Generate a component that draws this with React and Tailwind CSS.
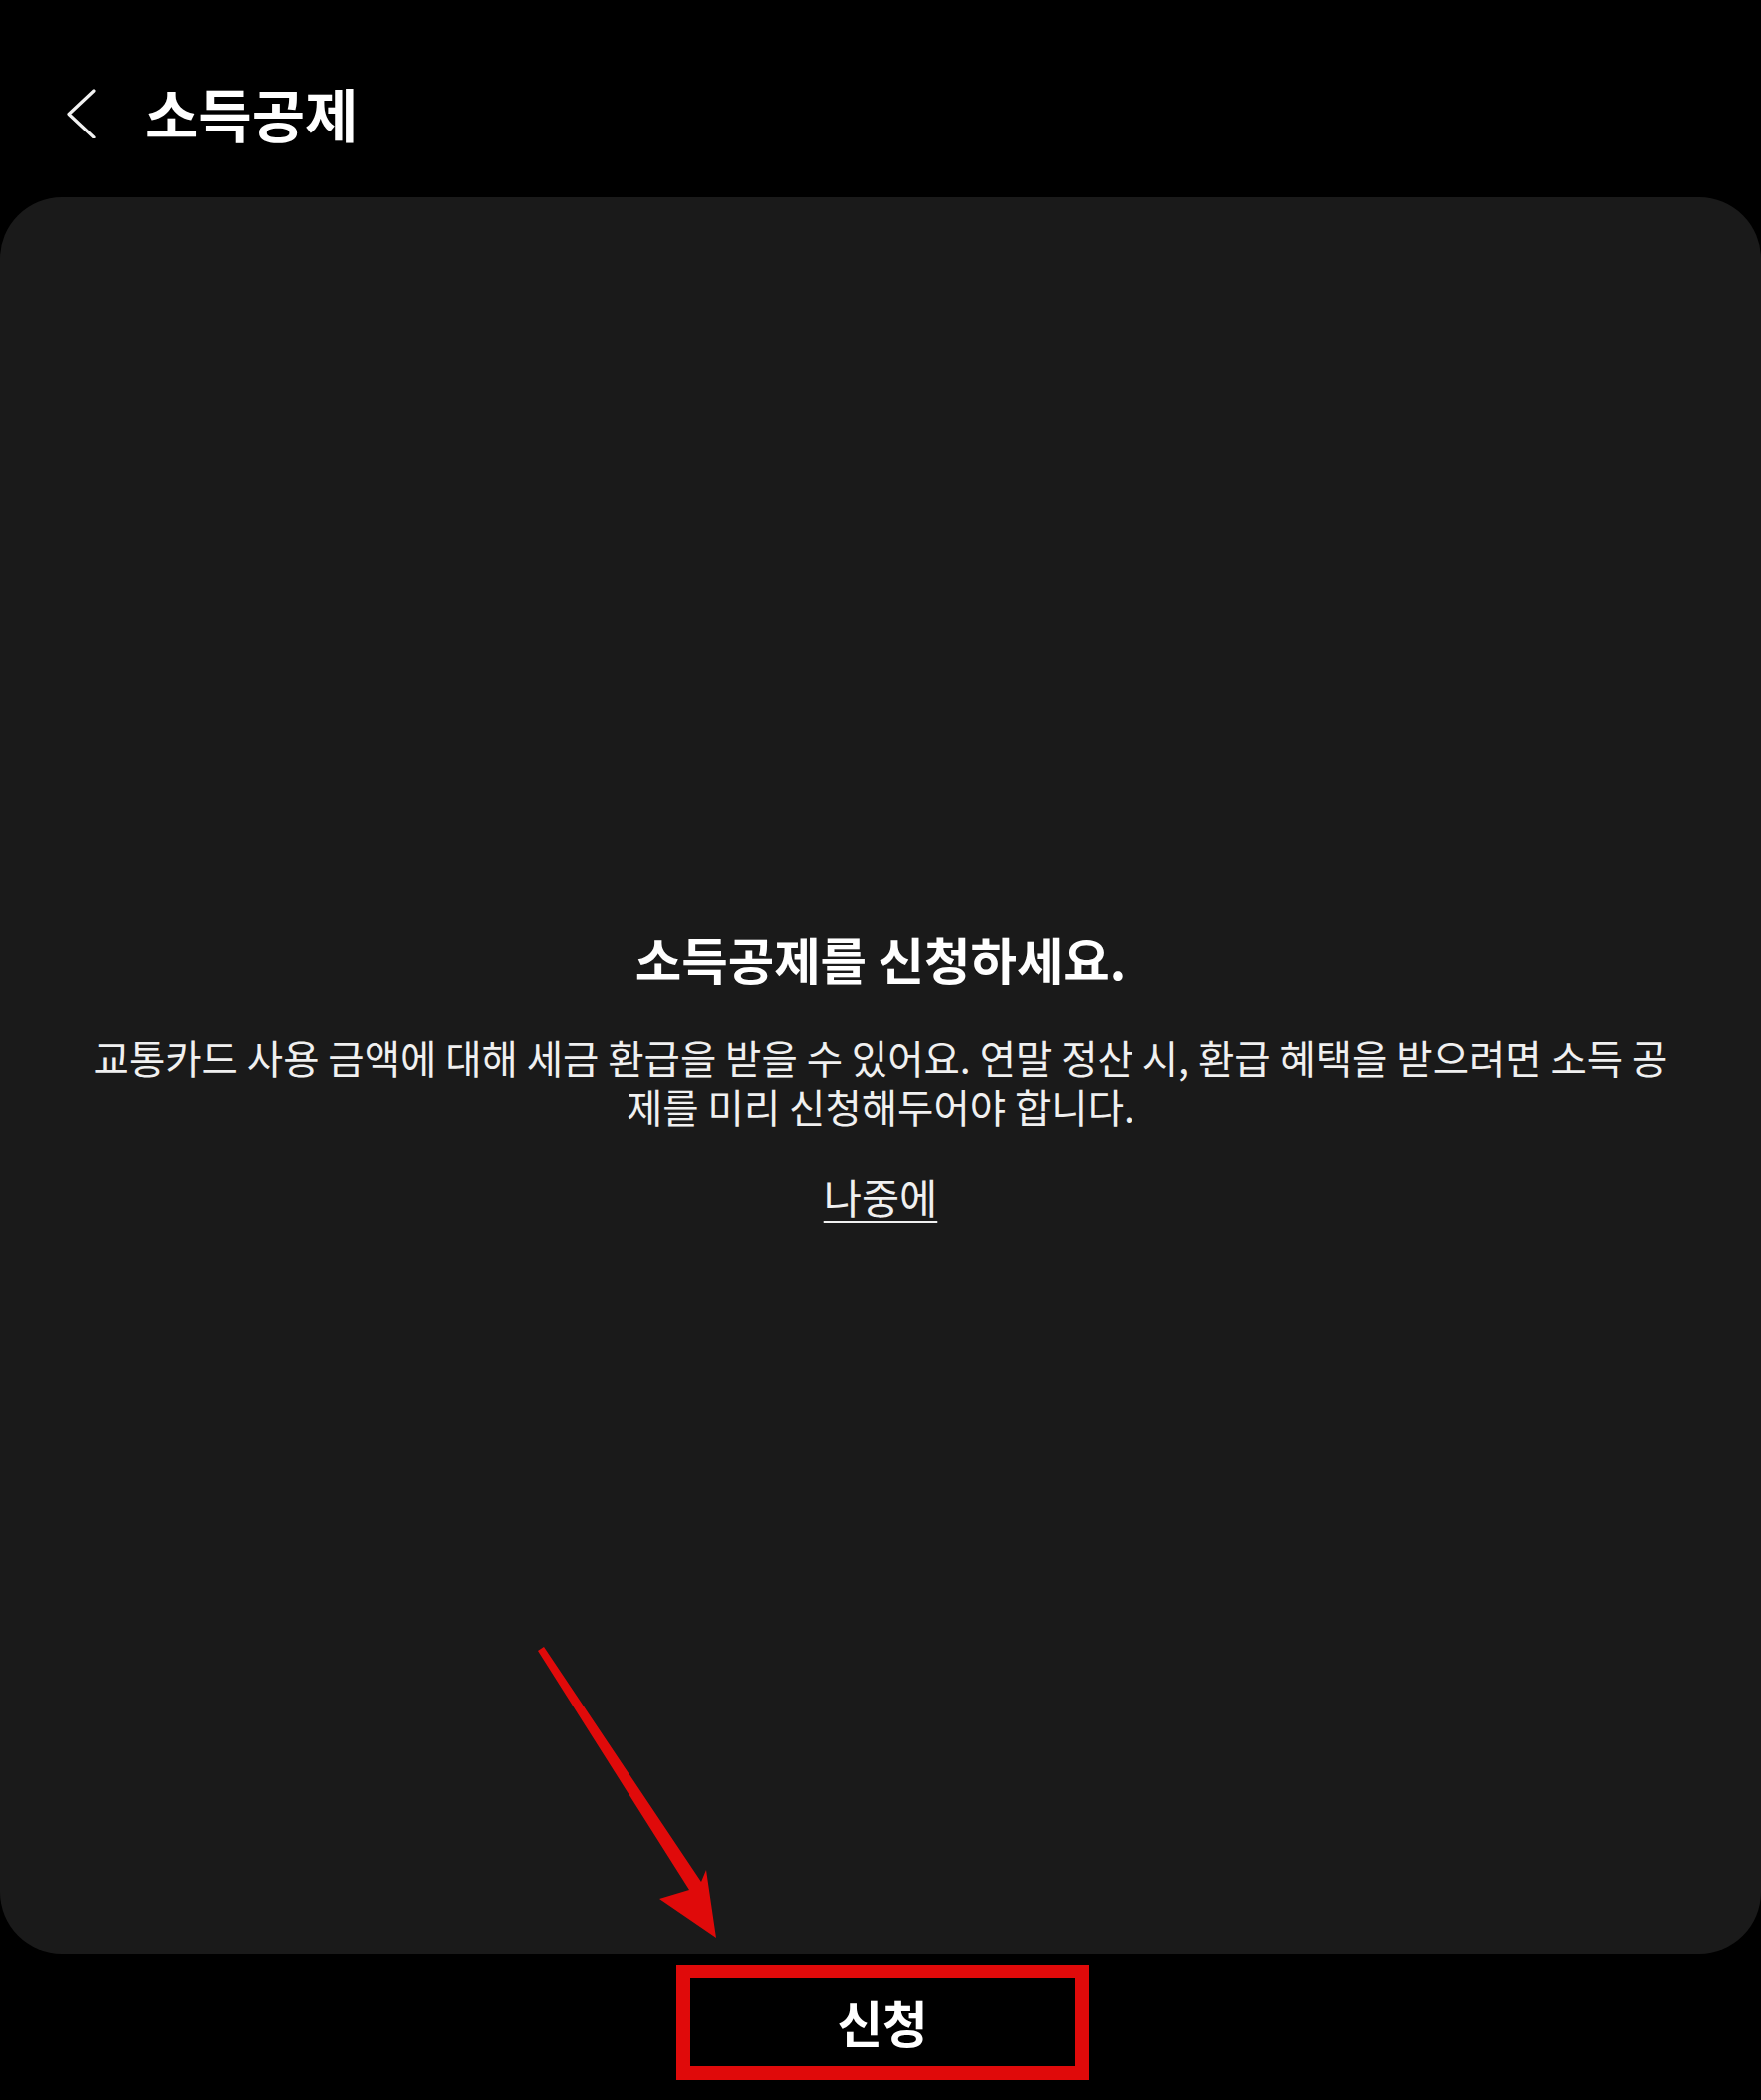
import React from "react";

export default function App() {
  return (
    <div className="relative w-[1768px] h-[2108px] bg-black flex flex-col overflow-hidden font-['Noto_Sans_CJK_KR','Noto_Sans',sans-serif] text-[#f5f5f5]">
      {/* Header */}
      <header className="h-[198px] shrink-0 pt-[81px]">
        <div className="h-[64px] flex items-center">
          <button className="ml-[66px] w-[30px] h-[52px] flex items-center justify-center" aria-label="뒤로">
            <svg width="30" height="52" viewBox="0 0 30 52" fill="none">
              <polyline points="28,4 3,27.5 28,51" stroke="#f2f2f2" strokeWidth="3.2" strokeLinecap="round" strokeLinejoin="round" />
            </svg>
          </button>
          <h1 className="ml-[50px] text-[58px] leading-[64px] font-bold text-white">소득공제</h1>
        </div>
      </header>

      {/* Card */}
      <main className="h-[1763px] shrink-0 bg-[#1a1a1a] rounded-[62px] flex flex-col items-center justify-center">
        <div className="flex flex-col items-center text-center">
          <h2 className="text-[50.5px] leading-[56px] font-bold text-white">소득공제를 신청하세요.</h2>
          <p className="mt-[46px] text-[39.5px] leading-[49px] font-normal text-[#f0f0f0] whitespace-nowrap">
            교통카드 사용 금액에 대해 세금 환급을 받을 수 있어요. 연말 정산 시, 환급 혜택을 받으려면 소득 공
            <br />
            제를 미리 신청해두어야 합니다.
          </p>
          <a className="mt-[42px] text-[41.5px] leading-[50px] text-[#f0f0f0] underline decoration-[2px] underline-offset-[7px]">
            나중에
          </a>
        </div>
      </main>

      {/* Bottom button */}
      <footer className="flex-1 flex justify-center pt-[11px]">
        <button className="ml-[4px] w-[414px] h-[116px] border-[14px] border-[#e00a0a] bg-black flex items-center justify-center">
          <span className="text-[49.5px] leading-[56px] font-bold text-white">신청</span>
        </button>
      </footer>

      {/* Annotation arrow */}
      <svg className="absolute inset-0 pointer-events-none" width="1768" height="2108" viewBox="0 0 1768 2108">
        <polygon
          fill="#e00a0a"
          points="540,1657 546,1653 704,1889 709,1877 719,1945 662,1906 692,1897"
        />
      </svg>
    </div>
  );
}
